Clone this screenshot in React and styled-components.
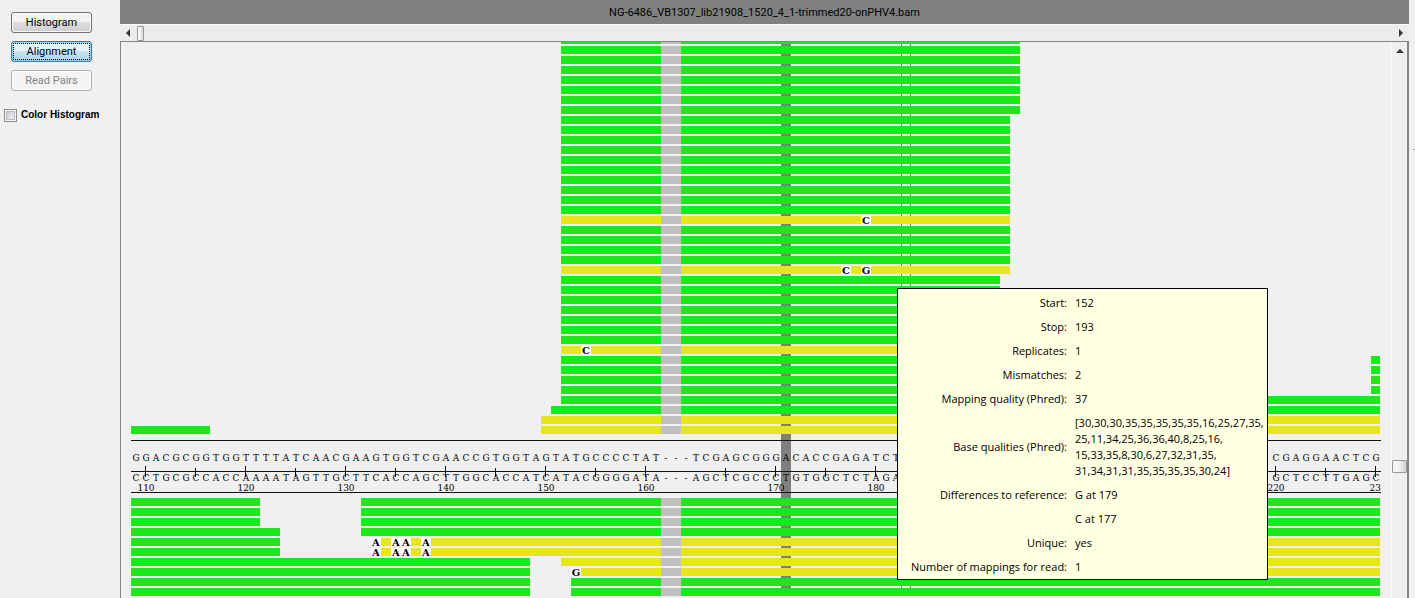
import React from "react";
import styled, { createGlobalStyle } from "styled-components";

const GlobalStyle = createGlobalStyle`
  * { box-sizing: border-box; }
  body { margin: 0; background: #f0f0f0; overflow: hidden; }
`;

const TOOLTIP_FONT = `"Open Sans", "Noto Sans", sans-serif`;
const UI_FONT = `Roboto, "Open Sans", sans-serif`;
const SLAB = `"DejaVu Serif", "Liberation Serif", serif`;

const COLUMNS = 125;
const GREEN = "#1ae81a";
const YELLOW = "#e6e61a";

const Page = styled.div`
  display: flex;
  height: 100vh;
  overflow: hidden;
  background: #f0f0f0;
  color: #000;
`;

const Sidebar = styled.aside`
  flex: 0 0 120px;
  display: flex;
  flex-direction: column;
  align-items: flex-start;
  gap: 8px;
  padding: 12px 0 0 11px;
`;

const ModeButton = styled.button`
  width: 81px;
  height: 21px;
  padding: 0;
  border: 1px solid ${(p) => (p.$active ? "#3c7fb1" : "#707070")};
  border-radius: 3px;
  background: ${(p) =>
    p.$active
      ? "linear-gradient(#e6f4fc 0 45%, #c6e4f5 50%, #b0d5ea)"
      : "linear-gradient(#f3f3f3 0 45%, #dddddd 50%, #cfcfcf)"};
  box-shadow: inset 0 0 0 1px ${(p) => (p.$active ? "#8fd0ee" : "#fafafa")};
  outline: ${(p) => (p.$active ? "1px dotted #000" : "none")};
  outline-offset: -3px;
  font: 11px/16px ${UI_FONT};
  color: #000;
  &:disabled {
    background: #f4f4f4;
    border-color: #b0b0b0;
    color: #838383;
  }
`;

const CheckLabel = styled.label`
  display: flex;
  align-items: center;
  gap: 4px;
  margin: 8px 0 0 -7px;
  font: bold 10px/16px "Liberation Sans", Arial, sans-serif;
  white-space: nowrap;
`;

const CheckBox = styled.input`
  appearance: none;
  width: 13px;
  height: 13px;
  margin: 0;
  border: 1px solid #8e8f8f;
  background: linear-gradient(135deg, #c4c8cc, #f6f6f6);
  box-shadow: inset 0 0 0 1px #f4f4f4, inset 0 0 0 2px #b8bcc0;
`;

const Viewer = styled.main`
  flex: 1;
  min-width: 0;
  display: flex;
  flex-direction: column;
`;

const TitleBar = styled.h1`
  flex: 0 0 24px;
  margin: 0;
  padding-top: 2px;
  background: #808080;
  font: 11px/22px ${UI_FONT};
  text-align: center;
`;

const HorizontalScroll = styled.div`
  flex: 0 0 17px;
  display: flex;
  align-items: center;
  gap: 5px;
  padding: 0 4px;
  border-top: 1px solid #fcfcfc;
  background: #ececec;
`;

const ArrowButton = styled.button`
  display: flex;
  align-items: center;
  justify-content: center;
  width: 8px;
  height: 8px;
  padding: 0;
  border: 0;
  background: none;
  margin-left: ${(p) => (p.$end ? "auto" : "0")};
`;

const Arrow = ({ d }) => (
  <svg width="8" height="8" viewBox="0 0 8 8" fill="#333" aria-hidden="true">
    <path d={d} />
  </svg>
);

const Thumb = styled.div`
  width: ${(p) => (p.$vertical ? 15 : 7)}px;
  height: ${(p) => (p.$vertical ? 13 : 15)}px;
  border: 1px solid #999;
  border-radius: 1px;
  background: linear-gradient(90deg, #f6f6f6 40%, #d2d2d2);
`;

const Body = styled.div`
  flex: 1;
  min-height: 0;
  display: flex;
  border: solid #85858c;
  border-width: 1px 2px 0 1px;
`;

const VerticalScroll = styled.div`
  flex: 0 0 16px;
  display: flex;
  flex-direction: column;
  align-items: center;
  justify-content: space-between;
  padding: 5px 0 125px;
  border-left: 1px solid #fafafa;
  background: #efefef;
`;

const Canvas = styled.section`
  position: relative;
  flex: 1;
  min-width: 0;
  overflow: hidden;
  padding-left: 10px;
`;

const Track = styled.div`
  width: ${COLUMNS * 10}px;
  background:
    linear-gradient(#808080, #808080) 650px 0 / 10px 100% no-repeat,
    linear-gradient(#777, #777) 770px 0 / 1px 100% no-repeat,
    linear-gradient(#777, #777) 779px 0 / 1px 100% no-repeat;
`;

const Reads = styled.div`
  display: flex;
  flex-direction: column;
  gap: 2px;
  margin-top: ${(p) => p.$offset}px;
`;

const cells = `
  display: grid;
  grid-template-columns: repeat(${COLUMNS}, 10px);
`;

const ReadRow = styled.div`
  ${cells}
  grid-template-rows: 8px;
`;

const Read = styled.div`
  grid-row: 1;
  grid-column: ${(p) => p.$from + 1} / ${(p) => p.$to + 1};
  margin-right: 1px;
  background: ${(p) => (p.$mismatch ? YELLOW : GREEN)};
`;

const Gap = styled.div`
  grid-row: 1;
  grid-column: 54 / 56;
  background: #c0c0c0;
`;

const Mismatch = styled.b`
  grid-row: 1;
  grid-column: ${(p) => p.$at + 1};
  background: #fff;
  font: bold 10px/10px ${SLAB};
  text-align: center;
`;

const Axis = styled.div`
  margin-top: 6px;
  height: 53px;
  padding-top: 12px;
  border: solid #111;
  border-width: 1px 0;
`;

const Sequence = styled.div`
  ${cells}
  height: 10px;
  font: 9px/10px ${SLAB};
  text-align: center;
`;

/* The ticks reach down into the complementary strand. */
const Ruler = styled.div`
  ${cells}
  height: 11px;
  margin: 3px 0 -4px;
  background: linear-gradient(#111, #111) 0 5px / 100% 1px no-repeat;
`;

const Tick = styled.i`
  grid-column: ${(p) => p.$at + 1};
  width: 1px;
  height: ${(p) => (p.$major ? 11 : 9)}px;
  margin: ${(p) => (p.$major ? 0 : 2)}px 0 0 4px;
  background: #111;
`;

const Labels = styled.div`
  ${cells}
  height: 9px;
  font: 9px/10px ${SLAB};
`;

const TickLabel = styled.span`
  grid-column: ${(p) => (p.$last ? `${p.$at} / ${p.$at + 2}` : p.$at + 1)};
  display: flex;
  justify-content: ${(p) => (p.$last ? "flex-end" : "center")};
`;

const Tooltip = styled.div`
  position: absolute;
  left: 776px;
  top: 246px;
  width: 371px;
  padding-top: 2px;
  border: 1px solid #000;
  background: #ffffe1;
`;

const Facts = styled.table`
  table-layout: fixed;
  width: 100%;
  border-collapse: collapse;
  font: 11px/16px ${TOOLTIP_FONT};
  th, td { padding: 4px 0; }
  th { width: 169px; font-weight: normal; text-align: right; white-space: nowrap; }
  td { padding-left: 8px; white-space: pre; }
`;

const SideEdge = styled.div`
  flex: 0 0 6px;
  padding: 149px 0 0 4px;
  &::after { content: ""; display: block; height: 1px; background: #a0a0a0; }
`;

// Each read: [first column, end column, has mismatches]; marks: [column, base].
const row = (reads, marks = []) => ({ reads, marks });
const repeat = (n, item) => Array.from({ length: n }, () => item);

const forwardRows = [
  ...repeat(8, row([[43, 89]])),
  ...repeat(10, row([[43, 88]])),
  row([[43, 88, true]], [[73, "C"]]),
  ...repeat(4, row([[43, 88]])),
  row([[43, 88, true]], [[71, "C"], [73, "G"]]),
  ...repeat(7, row([[43, 87]])),
  row([[43, 87, true]], [[45, "C"]]),
  ...repeat(4, row([[43, 87], [124, 125]])),
  row([[43, 125]]),
  row([[42, 125]]),
  row([[41, 125, true]]),
  row([[0, 8], [41, 125, true]]),
];

const reverseRows = [
  ...repeat(3, row([[0, 13], [23, 125]])),
  row([[0, 15], [23, 125]]),
  ...repeat(2, row([[0, 15], [24, 125, true]], [[24, "A"], [26, "A"], [27, "A"], [29, "A"]])),
  row([[0, 40], [43, 125, true]]),
  row([[0, 40], [44, 125, true]], [[44, "G"]]),
  ...repeat(2, row([[0, 40], [44, 125]])),
];

const forward =
  "GGACGCGGTGGTTTTATCAACGAAGTGGTCGAACCGTGGTAGTATGCCCCTAT---TCGAGCGGGACACCGAGATCT".padEnd(114) +
  "CGAGGAACTCG";
const pairs = { A: "T", T: "A", C: "G", G: "C" };
const reverse = [...forward].map((base) => pairs[base] || base).join("");

// The three-column insertion after position 162 shifts everything behind it.
const columnOf = (position) => position - 109 + (position > 162 ? 3 : 0);
const positions = Array.from({ length: 25 }, (_, i) => 110 + i * 5).filter((p) => columnOf(p) < COLUMNS);
// The tooltip covers positions 190 to 210; the last label keeps only the digits that fit.
const labelled = positions
  .filter((p) => p % 10 === 0 && (p < 190 || p > 210))
  .map((p) => ({ at: columnOf(p), last: p === 230, text: p === 230 ? "23" : String(p) }));

const ReadStack = ({ rows, offset }) => (
  <Reads $offset={offset}>
    {rows.map(({ reads, marks }, i) => (
      <ReadRow key={i}>
        {reads.map(([from, to, mismatch]) => (
          <Read key={from} $from={from} $to={to} $mismatch={mismatch} />
        ))}
        <Gap />
        {marks.map(([at, base]) => (
          <Mismatch key={at} $at={at}>{base}</Mismatch>
        ))}
      </ReadRow>
    ))}
  </Reads>
);

const Bases = ({ text }) => (
  <Sequence>
    {[...text].map((base, i) => (
      <span key={i}>{base}</span>
    ))}
  </Sequence>
);

const facts = [
  ["Start:", "152"],
  ["Stop:", "193"],
  ["Replicates:", "1"],
  ["Mismatches:", "2"],
  ["Mapping quality (Phred):", "37"],
  [
    "Base qualities (Phred):",
    "[30,30,30,35,35,35,35,35,16,25,27,35,\n25,11,34,25,36,36,40,8,25,16,\n15,33,35,8,30,6,27,32,31,35,\n31,34,31,31,35,35,35,35,30,24]",
  ],
  ["Differences to reference:", "G at 179"],
  ["", "C at 177"],
  ["Unique:", "yes"],
  ["Number of mappings for read:", "1"],
];

export default function App() {
  return (
    <>
      <GlobalStyle />
      <Page>
        <Sidebar>
          <ModeButton>Histogram</ModeButton>
          <ModeButton $active>Alignment</ModeButton>
          <ModeButton disabled>Read Pairs</ModeButton>
          <CheckLabel>
            <CheckBox type="checkbox" />
            Color Histogram
          </CheckLabel>
        </Sidebar>
        <Viewer>
          <TitleBar>NG-6486_VB1307_lib21908_1520_4_1-trimmed20-onPHV4.bam</TitleBar>
          <HorizontalScroll>
            <ArrowButton aria-label="Scroll left"><Arrow d="M6 0V8L2 4Z" /></ArrowButton>
            <Thumb />
            <ArrowButton $end aria-label="Scroll right"><Arrow d="M2 0V8L6 4Z" /></ArrowButton>
          </HorizontalScroll>
          <Body>
            <Canvas>
              <Track>
                <ReadStack rows={forwardRows} offset={-6} />
                <Axis>
                  <Bases text={forward} />
                  <Ruler>
                    {positions.map((p) => (
                      <Tick key={p} $at={columnOf(p)} $major={p % 10 === 0} />
                    ))}
                  </Ruler>
                  <Bases text={reverse} />
                  <Labels>
                    {labelled.map(({ at, last, text }) => (
                      <TickLabel key={at} $at={at} $last={last}>{text}</TickLabel>
                    ))}
                  </Labels>
                </Axis>
                <ReadStack rows={reverseRows} offset={5} />
              </Track>
              <Tooltip role="tooltip">
                <Facts>
                  <tbody>
                    {facts.map(([name, value]) => (
                      <tr key={value + name}>
                        <th scope="row">{name}</th>
                        <td>{value}</td>
                      </tr>
                    ))}
                  </tbody>
                </Facts>
              </Tooltip>
            </Canvas>
            <VerticalScroll>
              <ArrowButton aria-label="Scroll up"><Arrow d="M0 6H8L4 2Z" /></ArrowButton>
              <Thumb $vertical />
            </VerticalScroll>
          </Body>
        </Viewer>
        <SideEdge />
      </Page>
    </>
  );
}
